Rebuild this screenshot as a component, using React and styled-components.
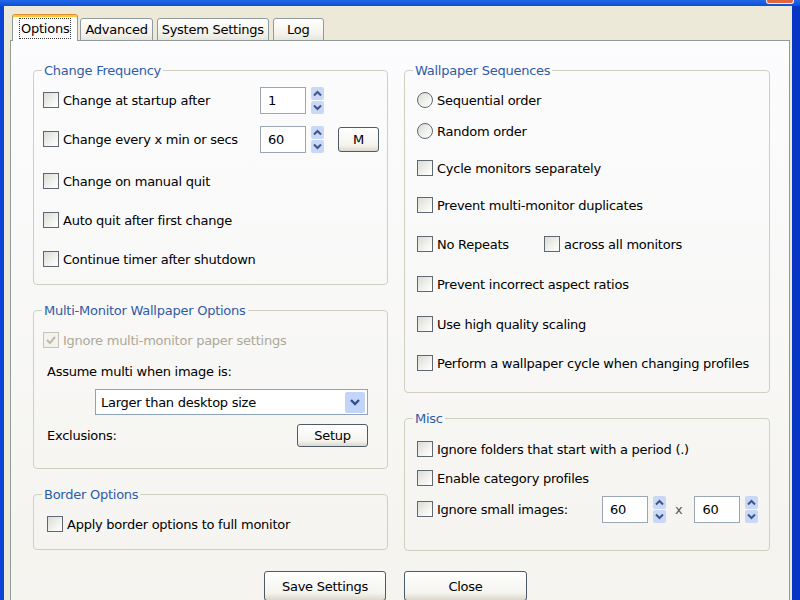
import React from 'react'
import styled, { createGlobalStyle } from 'styled-components'

const GlobalStyle = createGlobalStyle`
    html, body {
        margin: 0;
        padding: 0;
        overflow: hidden;
        background: #0A3FD0;
    }
    body {
        font-family: "DejaVu Sans", Tahoma, sans-serif;
        font-size: 13px;
        letter-spacing: -0.25px;
        color: #000;
    }
`

const Window = styled.div`
    width: 800px;
    height: 600px;
    display: flex;
    flex-direction: column;
    overflow: hidden;
`

const TitleBar = styled.div`
    height: 6px;
    flex-shrink: 0;
    display: flex;
    justify-content: flex-end;
    background: linear-gradient(180deg, #2467E6, #0B4FD8);
`

const CloseButton = styled.div`
    width: 26px;
    height: 3px;
    margin-right: 6px;
    background: #E2643C;
    border: 1px solid #F3F0EA;
    border-top: none;
    border-radius: 0 0 3px 3px;
`

const Frame = styled.div`
    flex: 1;
    display: flex;
    flex-direction: column;
    background: #ECE9D8;
    border-left: 4px solid #0C45D6;
    border-right: 8px solid #0836C4;
    padding: 8px 2px 0 6px;
    min-height: 0;
`

const TabStrip = styled.div`
    display: flex;
    align-items: flex-end;
    gap: 4px;
    padding-left: 4px;
    margin-bottom: -1px;
    position: relative;
    z-index: 1;
`

const Tab = styled.div`
    box-sizing: border-box;
    min-width: 51px;
    height: ${p => (p.$active ? 27 : 23)}px;
    padding: 0 ${p => (p.$active ? 6 : 4)}px;
    margin: 0 ${p => (p.$active ? -2 : 0)}px;
    display: flex;
    align-items: center;
    justify-content: center;
    border: 1px solid #919B9C;
    border-bottom: ${p => (p.$active ? 'none' : '1px solid #919B9C')};
    border-top-color: ${p => (p.$active ? '#E68B2C' : '#919B9C')};
    border-radius: 3px 3px 0 0;
    background: ${p => (p.$active
        ? '#FCFCFE'
        : 'linear-gradient(180deg, #FFFFFF, #F3F2EC 70%, #E6E5DE)')};
    box-shadow: ${p => (p.$active ? 'inset 0 2px 0 #FFC83C' : 'none')};
    white-space: nowrap;
`

const FocusText = styled.span`
    border: 1px dotted #3A3A3A;
    padding: 1px 1px;
    line-height: 17px;
`

const Panel = styled.div`
    flex: 1;
    border: 1px solid #919B9C;
    background: linear-gradient(180deg, #FCFCFE, #F4F3EE);
    padding: 21px 19px 20px 22px;
`

const Columns = styled.div`
    display: grid;
    grid-template-columns: 355px 366px;
    column-gap: 16px;
`

const Column = styled.div`
    display: flex;
    flex-direction: column;
    gap: 17px;
`

const Group = styled.fieldset`
    margin: 0;
    padding: 0;
    min-width: 0;
    border: 1px solid #D0D0BF;
    border-radius: 4px;
`

const Legend = styled.legend`
    color: #2F5BA9;
    margin-left: 8px;
    padding: 0 2px;
    line-height: 17px;
`

const GroupBody = styled.div`
    display: flex;
    flex-direction: column;
    padding: 0 ${p => (p.$pr === undefined ? 19 : p.$pr)}px ${p => p.$pb}px ${p => p.$pl}px;
`

const Row = styled.div`
    display: flex;
    align-items: center;
    height: ${p => p.$h || 30}px;
    margin-top: ${p => p.$mt || 0}px;
    white-space: nowrap;
`

const Cell = styled.div`
    display: flex;
    align-items: center;
    width: ${p => p.$w}px;
    flex-shrink: 0;
`

const Box = styled.span`
    box-sizing: border-box;
    width: 16px;
    height: 16px;
    flex-shrink: 0;
    display: inline-flex;
    align-items: center;
    justify-content: center;
    border: 1px solid ${p => (p.$disabled ? '#C6C3B6' : '#5E6873')};
    border-radius: ${p => (p.$round ? '50%' : '0')};
    background: ${p => (p.$disabled
        ? '#F3F2EC'
        : 'linear-gradient(135deg, #DCDCD5, #F6F6F3 70%, #FFFFFF)')};
`

const Label = styled.span`
    margin-left: 4px;
    color: ${p => (p.$disabled ? '#ACA899' : '#000')};
`

const Text = styled.span`
    margin-left: ${p => p.$ml || 0}px;
`

const Times = styled.span`
    flex-shrink: 0;
    margin: 0 12px 0 9px;
    color: #555;
`

const NumberField = styled.div`
    box-sizing: border-box;
    width: 46px;
    height: 27px;
    flex-shrink: 0;
    display: flex;
    align-items: center;
    padding-left: 7px;
    background: #fff;
    border: 1px solid #9AA6B4;
`

const Arrows = styled.div`
    display: flex;
    flex-direction: column;
    flex-shrink: 0;
    gap: 1px;
    margin-left: 5px;
`

const ArrowButton = styled.div`
    width: 13px;
    height: 13px;
    display: flex;
    align-items: center;
    justify-content: center;
    background: #CAD8F8;
    border-radius: 2px;
`

const Button = styled.div`
    box-sizing: border-box;
    width: ${p => p.$w}px;
    height: ${p => p.$h}px;
    flex-shrink: 0;
    display: flex;
    align-items: center;
    justify-content: center;
    border: 1px solid #4D5A68;
    border-radius: 3px;
    background: linear-gradient(180deg, #FFFFFF, #F4F3EE 75%, #DCD8CC);
    margin-left: ${p => p.$ml || 0}px;
    margin-right: ${p => p.$mr || 0}px;
    justify-self: ${p => p.$align || 'auto'};
`

const Select = styled.div`
    box-sizing: border-box;
    width: 274px;
    height: 26px;
    margin-left: 52px;
    display: flex;
    align-items: center;
    justify-content: space-between;
    padding: 0 2px 0 5px;
    background: #fff;
    border: 1px solid #8FA3BA;
`

const SelectArrow = styled.div`
    width: 20px;
    height: 21px;
    display: flex;
    align-items: center;
    justify-content: center;
    background: #C3D4FA;
    border-radius: 2px;
`

const SpreadRow = styled(Row)`
    justify-content: space-between;
    padding-left: 4px;
`

const ButtonRow = styled.div`
    display: grid;
    grid-template-columns: 355px 366px;
    column-gap: 16px;
    margin-top: 20px;
`

const Check = ({ label, checked, disabled }) => (
    <>
        <Box $disabled={disabled}>
            {checked && (
                <svg width="12" height="12" viewBox="0 0 12 12">
                    <polyline points="2,6 5,9 10,3" fill="none" stroke={disabled ? '#BDBAAC' : '#21A121'} strokeWidth="2" />
                </svg>
            )}
        </Box>
        {label && <Label $disabled={disabled}>{label}</Label>}
    </>
)

const Radio = ({ label }) => (
    <>
        <Box $round />
        <Label>{label}</Label>
    </>
)

const Chevron = ({ up }) => (
    <svg width="9" height="7" viewBox="0 0 9 7">
        <polyline
            points={up ? '1,5.5 4.5,2 8,5.5' : '1,1.5 4.5,5 8,1.5'}
            fill="none"
            stroke="#3D5688"
            strokeWidth="2"
        />
    </svg>
)

const Spin = ({ value }) => (
    <>
        <NumberField>{value}</NumberField>
        <Arrows>
            <ArrowButton><Chevron up /></ArrowButton>
            <ArrowButton><Chevron /></ArrowButton>
        </Arrows>
    </>
)

const tabs = ['Options', 'Advanced', 'System Settings', 'Log']

const sequenceRows = [
    { mt: 7, label: 'Cycle monitors separately' },
    { mt: 7, label: 'Prevent multi-monitor duplicates' },
]

const qualityRows = [
    { mt: 10, label: 'Prevent incorrect aspect ratios' },
    { mt: 10, label: 'Use high quality scaling' },
    { mt: 9, label: 'Perform a wallpaper cycle when changing profiles' },
]

export default function App() {
    return (
        <Window>
            <GlobalStyle />
            <TitleBar>
                <CloseButton />
            </TitleBar>
            <Frame>
                <TabStrip>
                    {tabs.map((name, index) => (
                        <Tab key={name} $active={index === 0}>
                            {index === 0 ? <FocusText>{name}</FocusText> : name}
                        </Tab>
                    ))}
                </TabStrip>
                <Panel>
                    <Columns>
                        <Column>
                            <Group>
                                <Legend>Change Frequency</Legend>
                                <GroupBody $pl={9} $pr={0} $pb={10}>
                                    <Row $mt={6}>
                                        <Cell $w={217}><Check label="Change at startup after" /></Cell>
                                        <Spin value="1" />
                                    </Row>
                                    <Row $mt={9}>
                                        <Cell $w={217}><Check label="Change every x min or secs" /></Cell>
                                        <Spin value="60" />
                                        <Button $w={41} $h={25} $ml={14}>M</Button>
                                    </Row>
                                    <Row $mt={12}><Check label="Change on manual quit" /></Row>
                                    <Row $mt={9}><Check label="Auto quit after first change" /></Row>
                                    <Row $mt={9}><Check label="Continue timer after shutdown" /></Row>
                                </GroupBody>
                            </Group>
                            <Group>
                                <Legend>Multi-Monitor Wallpaper Options</Legend>
                                <GroupBody $pl={9} $pb={21}>
                                    <Row $mt={6}><Check checked disabled label="Ignore multi-monitor paper settings" /></Row>
                                    <Row $mt={4} $h={24}><Text $ml={4}>Assume multi when image is:</Text></Row>
                                    <Row $mt={6} $h={26}>
                                        <Select>
                                            <span>Larger than desktop size</span>
                                            <SelectArrow>
                                                <svg width="12" height="8" viewBox="0 0 12 8">
                                                    <polyline points="2,2 6,6 10,2" fill="none" stroke="#34508A" strokeWidth="2.4" />
                                                </svg>
                                            </SelectArrow>
                                        </Select>
                                    </Row>
                                    <SpreadRow $mt={8} $h={24}>
                                        <span>Exclusions:</span>
                                        <Button $w={71} $h={23}>Setup</Button>
                                    </SpreadRow>
                                </GroupBody>
                            </Group>
                            <Group>
                                <Legend>Border Options</Legend>
                                <GroupBody $pl={13} $pb={10}>
                                    <Row $mt={6}><Check label="Apply border options to full monitor" /></Row>
                                </GroupBody>
                            </Group>
                        </Column>
                        <Column>
                            <Group>
                                <Legend>Wallpaper Sequences</Legend>
                                <GroupBody $pl={12} $pb={14}>
                                    <Row $mt={6}><Radio label="Sequential order" /></Row>
                                    <Row $mt={1}><Radio label="Random order" /></Row>
                                    {sequenceRows.map(row => (
                                        <Row key={row.label} $mt={row.mt}><Check label={row.label} /></Row>
                                    ))}
                                    <Row $mt={9}>
                                        <Cell $w={127}><Check label="No Repeats" /></Cell>
                                        <Check label="across all monitors" />
                                    </Row>
                                    {qualityRows.map(row => (
                                        <Row key={row.label} $mt={row.mt}><Check label={row.label} /></Row>
                                    ))}
                                </GroupBody>
                            </Group>
                            <Group>
                                <Legend>Misc</Legend>
                                <GroupBody $pl={12} $pr={0} $pb={27}>
                                    <Row $mt={8} $h={28}><Check label="Ignore folders that start with a period (.)" /></Row>
                                    <Row $mt={1} $h={28}><Check label="Enable category profiles" /></Row>
                                    <Row $mt={3} $h={28}>
                                        <Cell $w={185}><Check label="Ignore small images:" /></Cell>
                                        <Spin value="60" />
                                        <Times>x</Times>
                                        <Spin value="60" />
                                    </Row>
                                </GroupBody>
                            </Group>
                        </Column>
                    </Columns>
                    <ButtonRow>
                        <Button $w={122} $h={30} $mr={2} $align="end">Save Settings</Button>
                        <Button $w={123} $h={30} $align="start">Close</Button>
                    </ButtonRow>
                </Panel>
            </Frame>
        </Window>
    )
}
